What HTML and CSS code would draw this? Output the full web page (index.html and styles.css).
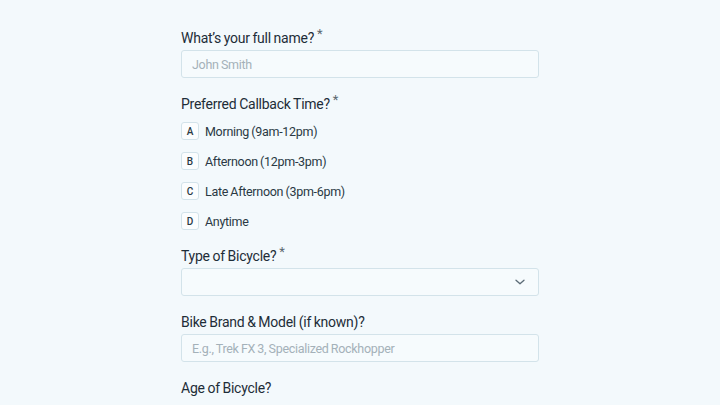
FILE: index.html
```html
<!DOCTYPE html>
<html lang="en">
<head>
    <meta charset="UTF-8">
    <meta name="viewport" content="width=device-width, initial-scale=1.0">
    <title>Bike Service Callback</title>
    <link rel="stylesheet" href="styles.css">
</head>
<body>
    <div class="container">
        <form class="form">
            <div class="form-group">
                <label class="label" for="full_name">What’s your full name?<span class="req">*</span></label>
                <input class="input" type="text" id="full_name" placeholder="John Smith">
            </div>

            <div class="form-group">
                <div class="label">Preferred Callback Time?<span class="req">*</span></div>
                <ul class="choices">
                    <li class="choice"><span class="key">A</span>Morning (9am-12pm)</li>
                    <li class="choice"><span class="key">B</span>Afternoon (12pm-3pm)</li>
                    <li class="choice"><span class="key">C</span>Late Afternoon (3pm-6pm)</li>
                    <li class="choice"><span class="key">D</span>Anytime</li>
                </ul>
            </div>

            <div class="form-group">
                <label class="label" for="bike_type">Type of Bicycle?<span class="req">*</span></label>
                <div class="select">
                    <span class="select-value"></span>
                    <svg class="chevron" width="12" height="12" viewBox="0 0 12 12" fill="none">
                        <path d="M2 4.2l4 3.6 4-3.6" stroke="#5b6b76" stroke-width="1.3" stroke-linecap="round" stroke-linejoin="round"/>
                    </svg>
                </div>
            </div>

            <div class="form-group">
                <label class="label" for="bike_model">Bike Brand &amp; Model (if known)?</label>
                <input class="input" type="text" id="bike_model" placeholder="E.g., Trek FX 3, Specialized Rockhopper">
            </div>

            <div class="form-group">
                <div class="label">Age of Bicycle?</div>
            </div>
        </form>
    </div>
</body>
</html>
```

FILE: styles.css
```css
body {
    font-family: Roboto, 'Noto Sans', sans-serif;
    background-color: #f3f9fc;
    color: #1e2d38;
    margin: 0;
    padding: 0;
}

.container {
    display: flex;
    justify-content: center;
    padding-top: 28px;
}

.form {
    width: 358px;
}

.form-group {
    margin-bottom: 16px;
}

.label {
    display: block;
    font-size: 14px;
    line-height: 20px;
    height: 20px;
    margin-bottom: 2px;
    letter-spacing: -0.25px;
    word-spacing: -0.5px;
}

.req {
    color: #5b6870;
    font-size: 13px;
    position: relative;
    top: -5px;
    margin-left: 3px;
}

.input, .select {
    display: block;
    width: 100%;
    height: 28px;
    box-sizing: border-box;
    padding: 0 10px;
    border: 1px solid #d3e3ea;
    border-radius: 3px;
    background-color: #f6fbfd;
    font-family: inherit;
    font-size: 12.5px;
    letter-spacing: -0.3px;
    word-spacing: -0.5px;
    color: #1e2d38;
    outline: none;
}

.input::placeholder {
    color: #a4b1b9;
}

.select {
    display: flex;
    align-items: center;
    justify-content: space-between;
}

.chevron {
    margin-right: 2px;
}

.choices {
    list-style: none;
    margin: 8px 0 0;
    padding: 0;
}

.choice {
    display: flex;
    align-items: center;
    height: 18px;
    margin-bottom: 12px;
    font-size: 12.5px;
    letter-spacing: -0.3px;
    word-spacing: -0.5px;
    color: #2a3944;
}

.choice:last-child {
    margin-bottom: 0;
}

.key {
    display: inline-flex;
    align-items: center;
    justify-content: center;
    width: 18px;
    height: 18px;
    box-sizing: border-box;
    border: 1px solid #d3e3ea;
    border-radius: 3px;
    background-color: #fbfdfe;
    font-size: 10px;
    font-weight: 500;
    letter-spacing: 0;
    margin-right: 6px;
}
```
